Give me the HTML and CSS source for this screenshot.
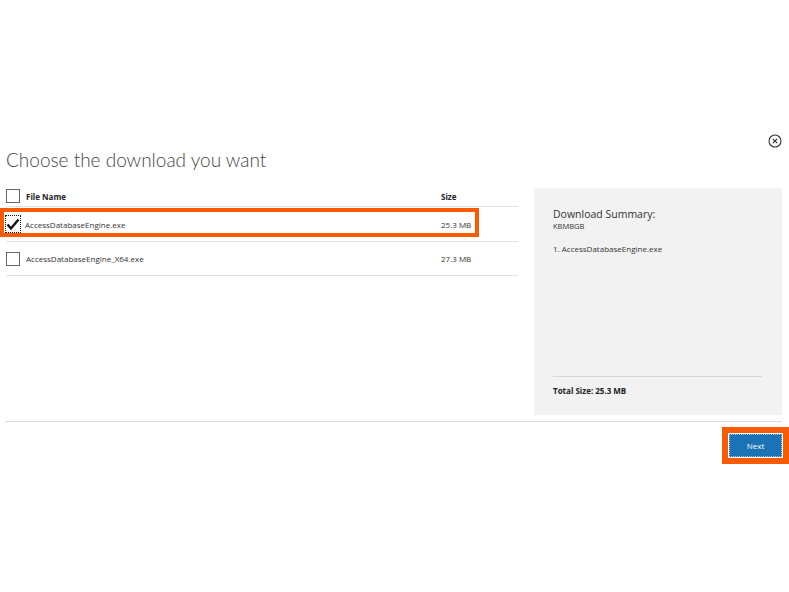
FILE: index.html
```html
<!DOCTYPE html>
<html lang="en">
<head>
  <meta charset="UTF-8">
  <title>Choose the download you want</title>
  <link rel="stylesheet" href="styles.css">
</head>
<body>
  <div class="dialog">
    <div class="close-row">
      <button class="close-btn" aria-label="Close">
        <svg width="14" height="14" viewBox="0 0 14 14">
          <circle cx="7" cy="7" r="6" fill="none" stroke="#333" stroke-width="1.1"/>
          <path d="M4.8 4.8 L9.2 9.2 M9.2 4.8 L4.8 9.2" stroke="#333" stroke-width="1.2"/>
        </svg>
      </button>
    </div>

    <h1 class="title">Choose the download you want</h1>

    <div class="content">
      <!-- lista de arquivos -->
      <div class="files">
        <div class="file-row header">
          <span class="check"></span>
          <span class="name">File Name</span>
          <span class="size">Size</span>
        </div>
        <div class="file-row selected">
          <span class="check checked">
            <svg width="14" height="13" viewBox="0 0 14 13">
              <path d="M1.5 6.5 L5 10.5 L12.5 1.5" fill="none" stroke="#111" stroke-width="2.4"/>
            </svg>
          </span>
          <span class="name">AccessDatabaseEngine.exe</span>
          <span class="size">25.3 MB</span>
        </div>
        <div class="file-row">
          <span class="check"></span>
          <span class="name">AccessDatabaseEngine_X64.exe</span>
          <span class="size">27.3 MB</span>
        </div>
      </div>

      <!-- resumo -->
      <div class="summary">
        <div class="summary-title">Download Summary:</div>
        <div class="summary-sub">KBMBGB</div>
        <ol class="summary-list">
          <li>1. AccessDatabaseEngine.exe</li>
        </ol>
        <div class="summary-total">Total Size: 25.3 MB</div>
      </div>
    </div>

    <div class="footer">
      <div class="next-wrap">
        <button class="next-btn">Next</button>
      </div>
    </div>
  </div>
</body>
</html>
```

FILE: styles.css
```css
body {
  margin: 0;
  background: #fff;
  font-family: "Open Sans", "Noto Sans", sans-serif;
  color: #222;
}
.dialog {
  width: 776px;
  margin-left: 6px;
  padding-top: 134px;
}
.close-row {
  display: flex;
  justify-content: flex-end;
  height: 14px;
}
.close-btn {
  border: none;
  background: none;
  padding: 0;
  width: 14px;
  height: 14px;
  cursor: pointer;
}
.title {
  margin: 0;
  font-family: Lato, "Open Sans", sans-serif;
  font-size: 19px;
  font-weight: 300;
  color: #444;
  line-height: 24px;
  height: 40px;
}
.content {
  display: flex;
  justify-content: space-between;
}
.files {
  width: 512px;
}
.file-row {
  position: relative;
  display: flex;
  align-items: center;
  height: 33px;
  border-bottom: 1px solid #e1e1e1;
  font-size: 8px;
  color: #333;
}
.file-row.header {
  height: 16px;
  padding-bottom: 2px;
  font-weight: 700;
  color: #222;
}
.file-row.selected {
  height: 34px;
}
.file-row.selected::after {
  content: "";
  position: absolute;
  left: -6px;
  top: 1px;
  width: 471px;
  height: 21px;
  border: 4px solid #fa5a00;
}
.check {
  display: flex;
  align-items: center;
  justify-content: center;
  width: 12px;
  height: 12px;
  border: 1px solid #666;
  background: #fff;
  margin-right: 6px;
}
.check.checked {
  width: 14px;
  height: 16px;
  border: 1px dotted #111;
  margin-left: -1px;
  margin-right: 4px;
}
.name {
  flex: 1;
}
.size {
  width: 77px;
}
.summary {
  width: 229px;
  height: 205px;
  background: #f2f2f2;
  padding: 20px 0 2px 19px;
  display: flex;
  flex-direction: column;
  color: #333;
}
.summary-title {
  font-size: 10.5px;
  line-height: 13px;
}
.summary-sub {
  font-size: 7.5px;
  line-height: 10px;
}
.summary-list {
  list-style: none;
  margin: 12px 0 0;
  padding: 0;
  font-size: 8px;
  flex: 1;
}
.summary-total {
  width: 209px;
  border-top: 1px solid #d8d8d8;
  padding-top: 8px;
  height: 28px;
  font-size: 8px;
  font-weight: 700;
  color: #222;
}
.footer {
  margin-top: 6px;
  border-top: 1px solid #ddd;
  display: flex;
  justify-content: flex-end;
  padding-top: 5px;
}
.next-wrap {
  border: 6px solid #fa5a00;
  padding: 1px;
  margin-right: -7px;
  width: 53px;
}
.next-btn {
  display: block;
  width: 53px;
  height: 23px;
  border: 1px dotted #9cc3e0;
  background: #1a73b5;
  color: #fff;
  font-family: "Open Sans", "Noto Sans", sans-serif;
  font-size: 8px;
  cursor: pointer;
}
```
